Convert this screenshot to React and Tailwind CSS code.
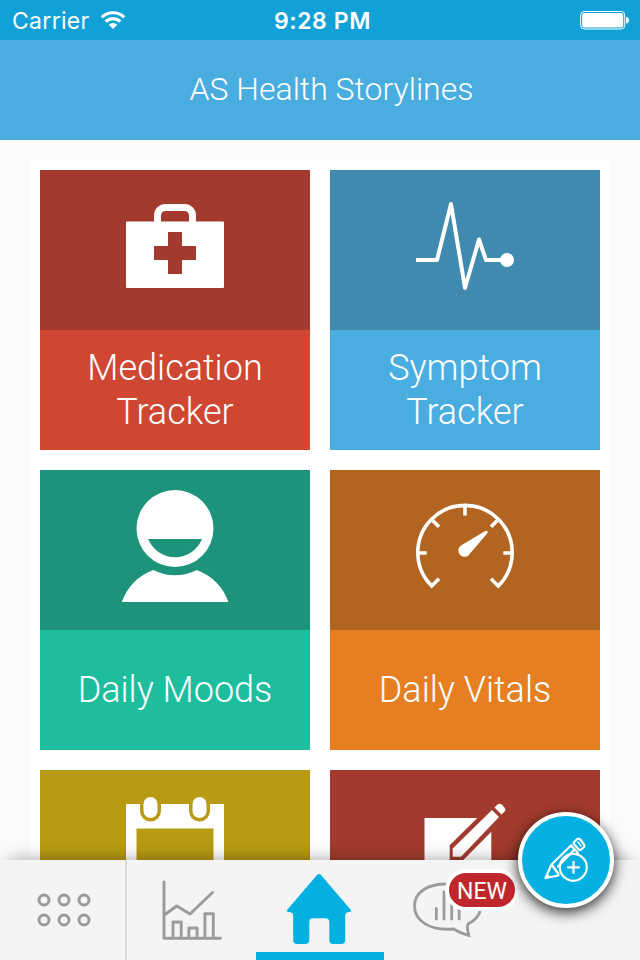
const tiles = [
  {
    id: "medication",
    title: "Medication Tracker",
    top: "bg-[#a23b2d]",
    bottom: "bg-[#cf4632]",
    Icon: MedicationIcon,
  },
  {
    id: "symptom",
    title: "Symptom Tracker",
    top: "bg-[#408ab0]",
    bottom: "bg-[#4aade0]",
    Icon: PulseIcon,
  },
  {
    id: "moods",
    title: "Daily Moods",
    top: "bg-[#1d937b]",
    bottom: "bg-[#1dbd9d]",
    Icon: MoodIcon,
  },
  {
    id: "vitals",
    title: "Daily Vitals",
    top: "bg-[#b16521]",
    bottom: "bg-[#e57f22]",
    Icon: GaugeIcon,
  },
  {
    id: "calendar",
    top: "bg-[#b89a14]",
    bottom: "bg-[#f1c40f]",
    Icon: CalendarIcon,
  },
  {
    id: "journal",
    top: "bg-[#a23b2d]",
    bottom: "bg-[#cf4632]",
    Icon: JournalIcon,
  },
];

function MedicationIcon() {
  return (
    <svg viewBox="0 0 270 160" className="h-40 w-full" fill="white">
      <path
        fillRule="evenodd"
        d="M87 51.5H183a1 1 0 0 1 1 1V117a1 1 0 0 1-1 1H87a1 1 0 0 1-1-1V52.500a1 1 0 0 1 1-1zM128 62V76H114V90H128V104H142V90H156V76H142V62z"
      />
      <path
        d="M117.500 53V45.500a8 8 0 0 1 8-8h19a8 8 0 0 1 8 8V53"
        fill="none"
        stroke="white"
        strokeWidth="7"
      />
    </svg>
  );
}

function PulseIcon() {
  return (
    <svg viewBox="0 0 270 160" className="h-40 w-full" fill="none">
      <path
        d="M86 90h21L121 34L135 118L149 69.500L156 90H172"
        stroke="white"
        strokeWidth="4"
        strokeLinejoin="round"
      />
      <circle cx="177" cy="90" r="7" fill="white" />
    </svg>
  );
}

function MoodIcon() {
  return (
    <svg viewBox="0 0 270 160" className="h-40 w-full" fill="white">
      <path
        fillRule="evenodd"
        d="M135 20a38.500 38.500 0 1 1 0 77a38.500 38.500 0 1 1 0-77zM108.200 69A29 29 0 0 0 162 69z"
      />
      <path d="M81.800 132A54 54 0 0 1 113.300 100A47 47 0 0 0 156.700 100A54 54 0 0 1 188.400 132z" />
    </svg>
  );
}

function GaugeIcon() {
  return (
    <svg viewBox="0 0 270 160" className="h-40 w-full" fill="none">
      <path
        d="M109 108.700L101.700 116A47.200 47.200 0 1 1 168.300 116L161 108.700M135 36V45.500M101.700 49.500L109 56.800M168.300 49.500L161 56.800M88 83H96.700M173.300 83H182"
        stroke="white"
        strokeWidth="3.6"
      />
      <path
        d="M154.800 61.300Q156.600 60.200 157.400 61.200T157 63.800L140 83.500A6.200 6.200 0 1 1 131 75.500z"
        fill="white"
      />
    </svg>
  );
}

function CalendarIcon() {
  return (
    <svg viewBox="0 0 270 160" className="h-40 w-full" fill="white">
      <path
        fillRule="evenodd"
        d="M87 34H100V41a10.500 10.500 0 0 0 21 0V34H149V41a10.500 10.500 0 0 0 21 0V34H183a1 1 0 0 1 1 1V130H86V35a1 1 0 0 1 1-1zM96.500 58.500V120H173.500V58.500z"
      />
      <rect x="103.500" y="27" width="14" height="21" rx="7" />
      <rect x="152.500" y="27" width="14" height="21" rx="7" />
    </svg>
  );
}

function JournalIcon() {
  return (
    <svg viewBox="0 0 270 160" className="h-40 w-full" fill="white">
      <path d="M94.500 48H147.300L119.700 75.300V90H133.300L161.300 61.700V130H94.500z" />
      <path d="M162 40L169 47L131 86.700H122.700V78.500z" />
      <path d="M164.500 37.500L167.500 34.500Q170 33 172 34.800L174.500 37.500Q176.200 39.500 174.500 41.500L171.500 44.500z" />
    </svg>
  );
}

function StatusBar() {
  return (
    <div className="grid h-10 shrink-0 grid-cols-3 items-center bg-[#12a1d7] pr-[11px] pl-3 font-['Inter',sans-serif] text-white">
      <div className="flex items-center gap-[10px]">
        <span className="pt-0.5 text-[23px] leading-none tracking-[0.3px]">
          Carrier
        </span>
        <svg viewBox="0 0 26 20" className="h-5 w-[26px]" fill="none">
          <g stroke="white" strokeWidth="3.200">
            <path d="M1.800 7.300a16 16 0 0 1 22.400 0" />
            <path d="M5.700 11.600a10.300 10.300 0 0 1 14.600 0" />
          </g>
          <path d="M13 19L8.800 14.700a6 6 0 0 1 8.400 0z" fill="white" />
        </svg>
      </div>
      <span className="pt-0.5 pl-1 text-center text-[23px] leading-none font-semibold tracking-[0.6px] whitespace-nowrap">
        9:28 PM
      </span>
      <svg
        viewBox="0 0 49 20"
        className="h-5 w-[49px] justify-self-end"
        fill="none"
      >
        <rect x="0.700" y="1.500" width="44" height="17.500" rx="3.500" stroke="white" />
        <rect x="2.200" y="3" width="41" height="14.500" rx="2" fill="white" />
        <path d="M46 7q3 .5 3 3.300T46 13.600z" fill="white" />
      </svg>
    </div>
  );
}

function Tile({ title, top, bottom, Icon }) {
  return (
    <div className="h-[280px]">
      <div className={top}>
        <Icon />
      </div>
      <div
        className={`flex h-[120px] items-center justify-center px-8 text-center text-[36px] leading-[44px] font-light text-white ${bottom}`}
      >
        {title}
      </div>
    </div>
  );
}

function TabBar() {
  return (
    <nav className="relative grid h-[100px] shrink-0 grid-cols-5 bg-[#f4f4f4] shadow-[0_-8px_18px_-10px_rgba(0,0,0,0.45)]">
      <svg viewBox="0 0 128 100" className="h-full w-full" fill="none">
        <g stroke="#9b9b9b" strokeWidth="3">
          {[44, 64, 84].map((x) => (
            <g key={x}>
              <circle cx={x} cy="40" r="5" />
              <circle cx={x} cy="60" r="5" />
            </g>
          ))}
        </g>
        <path d="M126 0V100" stroke="#dcdcdc" strokeWidth="2" />
      </svg>
      <svg
        viewBox="0 0 128 100"
        className="h-full w-full"
        fill="none"
        stroke="#9b9b9b"
        strokeWidth="2.9"
        strokeLinecap="round"
        strokeLinejoin="round"
      >
        <path d="M36 22V78.200H92.500" />
        <path d="M37 54.500L48.700 46L62 54L84.500 32.500" />
        <path d="M45 78V62H53.200V78M60.900 78V68H69.100V78M76.900 78V53.700H85.300V78" />
      </svg>
      <svg viewBox="0 0 128 100" className="h-full w-full" fill="#04b0e2">
        <path d="M60.800 15.200Q63 13 65.200 15.200L94.500 49.500Q96 51.700 93.500 51.900Q89.200 52 89.200 55.500V80Q89.200 84 85.200 84H77.300Q73.300 84 73.300 80V62.300Q73.300 58.300 69.300 58.300H57.300Q53.300 58.300 53.300 62.300V80Q53.300 84 49.300 84H41.200Q37.200 84 37.200 80V55.500Q37.200 52 32.500 51.900Q30 51.700 31.500 49.500z" />
        <rect y="92" width="128" height="8" />
      </svg>
      <div className="relative">
        <svg
          viewBox="0 0 128 100"
          className="h-full w-full"
          fill="none"
          stroke="#9b9b9b"
          strokeWidth="2.8"
          strokeLinecap="round"
        >
          <path d="M96.500 49C95.500 56 90 61 84 64Q82.500 66.500 84.800 75.500Q76 73 69.500 69C46 71 30.500 61 30.500 46C30.500 32 44 24 62 24C82 24 97 34 96.500 49z" />
          <path d="M52.300 48.500V59M60 32V59M67.700 37V59M75.200 48V59" />
        </svg>
        <span className="absolute top-[9px] left-[61px] flex h-[42px] w-[74px] items-center justify-center rounded-full border-4 border-white bg-[#c0272d] pt-0.5 text-[23px] leading-none text-white">
          NEW
        </span>
      </div>
    </nav>
  );
}

function AddButton() {
  return (
    <button className="absolute right-[26px] bottom-[52px] h-24 w-24 rounded-full border-4 border-white bg-[#04b0e2] shadow-[0_4px_14px_rgba(0,0,0,0.85)]">
      <svg
        viewBox="4 4 88 88"
        className="h-full w-full"
        fill="none"
        stroke="white"
        strokeWidth="2.2"
        strokeLinecap="round"
        strokeLinejoin="round"
      >
        <circle cx="55.300" cy="55.300" r="13.500" />
        <path d="M50 55.300H61M55.500 49.800V60.800" />
        <path d="M53 33.500L33.500 52.500L27.500 66L40.500 63.500M53 33.500L59.800 40.800M33.500 52.500L40.500 62M40 54.500L56 38M29.500 63.500L31 65" />
        <path d="M56.300 29.800L59 27.200Q61 26 62.500 27.800L65.700 32Q67 34 65.500 35.500L62.800 37.800Q61.500 38.500 60.300 37L56 32Q55 30.800 56.300 29.800z" />
        <path d="M60 30L63 34" strokeWidth="1.500" />
      </svg>
    </button>
  );
}

function App() {
  return (
    <div className="relative flex h-[960px] w-[640px] flex-col overflow-hidden bg-[#fbfbfb] font-['Roboto',sans-serif]">
      <StatusBar />
      <header className="flex h-[100px] shrink-0 items-center justify-center bg-[#4aade0] pb-0.5 pl-[23px] text-[32px] font-light text-white">
        <h1>AS Health Storylines</h1>
      </header>
      <main className="min-h-0 flex-1 overflow-hidden px-[30px] pt-5">
        <div className="grid grid-cols-2 gap-5 bg-white p-[10px]">
          {tiles.map((tile) => (
            <Tile key={tile.id} {...tile} />
          ))}
        </div>
      </main>
      <TabBar />
      <AddButton />
    </div>
  );
}

export default App;
